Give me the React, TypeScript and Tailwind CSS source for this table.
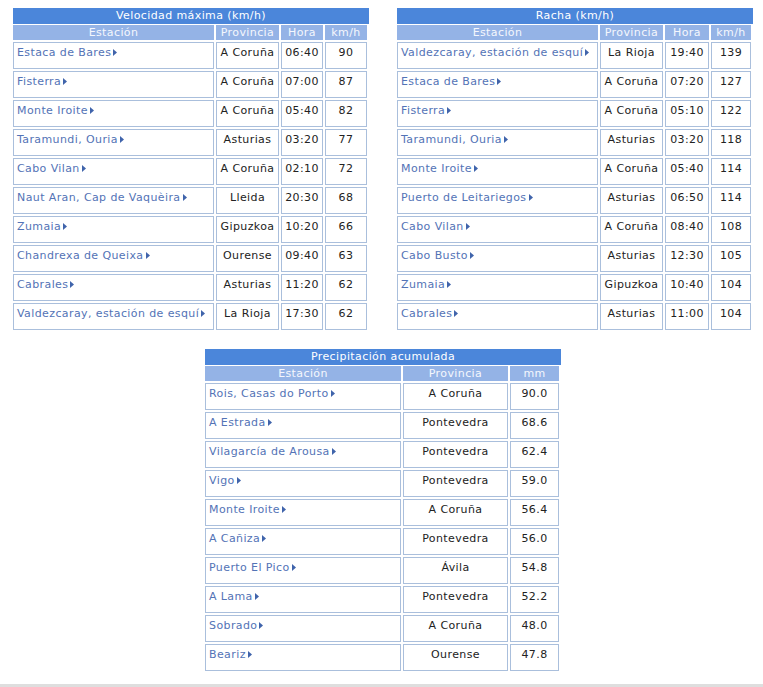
type Row = { name: string; prov: string; hora?: string; val: string }

const velocidad: Row[] = [
  { name: 'Estaca de Bares', prov: 'A Coruña', hora: '06:40', val: '90' },
  { name: 'Fisterra', prov: 'A Coruña', hora: '07:00', val: '87' },
  { name: 'Monte Iroite', prov: 'A Coruña', hora: '05:40', val: '82' },
  { name: 'Taramundi, Ouria', prov: 'Asturias', hora: '03:20', val: '77' },
  { name: 'Cabo Vilan', prov: 'A Coruña', hora: '02:10', val: '72' },
  { name: 'Naut Aran, Cap de Vaquèira', prov: 'Lleida', hora: '20:30', val: '68' },
  { name: 'Zumaia', prov: 'Gipuzkoa', hora: '10:20', val: '66' },
  { name: 'Chandrexa de Queixa', prov: 'Ourense', hora: '09:40', val: '63' },
  { name: 'Cabrales', prov: 'Asturias', hora: '11:20', val: '62' },
  { name: 'Valdezcaray, estación de esquí', prov: 'La Rioja', hora: '17:30', val: '62' },
]

const racha: Row[] = [
  { name: 'Valdezcaray, estación de esquí', prov: 'La Rioja', hora: '19:40', val: '139' },
  { name: 'Estaca de Bares', prov: 'A Coruña', hora: '07:20', val: '127' },
  { name: 'Fisterra', prov: 'A Coruña', hora: '05:10', val: '122' },
  { name: 'Taramundi, Ouria', prov: 'Asturias', hora: '03:20', val: '118' },
  { name: 'Monte Iroite', prov: 'A Coruña', hora: '05:40', val: '114' },
  { name: 'Puerto de Leitariegos', prov: 'Asturias', hora: '06:50', val: '114' },
  { name: 'Cabo Vilan', prov: 'A Coruña', hora: '08:40', val: '108' },
  { name: 'Cabo Busto', prov: 'Asturias', hora: '12:30', val: '105' },
  { name: 'Zumaia', prov: 'Gipuzkoa', hora: '10:40', val: '104' },
  { name: 'Cabrales', prov: 'Asturias', hora: '11:00', val: '104' },
]

const precip: Row[] = [
  { name: 'Rois, Casas do Porto', prov: 'A Coruña', val: '90.0' },
  { name: 'A Estrada', prov: 'Pontevedra', val: '68.6' },
  { name: 'Vilagarcía de Arousa', prov: 'Pontevedra', val: '62.4' },
  { name: 'Vigo', prov: 'Pontevedra', val: '59.0' },
  { name: 'Monte Iroite', prov: 'A Coruña', val: '56.4' },
  { name: 'A Cañiza', prov: 'Pontevedra', val: '56.0' },
  { name: 'Puerto El Pico', prov: 'Ávila', val: '54.8' },
  { name: 'A Lama', prov: 'Pontevedra', val: '52.2' },
  { name: 'Sobrado', prov: 'A Coruña', val: '48.0' },
  { name: 'Beariz', prov: 'Ourense', val: '47.8' },
]

const cell = 'h-[27px] border border-[#aabfdc] pt-[3px] leading-[13px] text-[#222]'
const head = 'h-[15px] bg-[#94b3e6] text-center leading-[15px] text-[#f4f7fd]'

function Arrow() {
  return (
    <svg width="4" height="7" viewBox="0 0 4 7" className="ml-[2px] inline-block align-[0px]">
      <polygon points="0,0 4,3.5 0,7" fill="#4064ab" />
    </svg>
  )
}

function Table({ title, cols, rows, unit, withHora }: {
  title: string
  cols: string
  rows: Row[]
  unit: string
  withHora: boolean
}) {
  return (
    <div className="w-[356px]">
      <div className="h-[16px] bg-[#4b86da] text-center leading-[16px] text-white">{title}</div>
      <div className={`mt-[1px] grid gap-[2px] ${cols}`}>
        <div className={head}>Estación</div>
        <div className={head}>Provincia</div>
        {withHora && <div className={head}>Hora</div>}
        <div className={head}>{unit}</div>
        {rows.map(r => (
          <div key={r.name + r.val} className="contents">
            <div className={`${cell} pl-[3px] whitespace-nowrap`}>
              <a className="text-[#5373b6]">{r.name}</a>
              <Arrow />
            </div>
            <div className={`${cell} text-center`}>{r.prov}</div>
            {withHora && <div className={`${cell} text-center`}>{r.hora}</div>}
            <div className={`${cell} text-center`}>{r.val}</div>
          </div>
        ))}
      </div>
    </div>
  )
}

export default function App() {
  return (
    <div className="min-h-[687px] bg-white text-[11px] tracking-[0.4px] font-['DejaVu_Sans',Verdana,sans-serif]">
      <div className="flex gap-[28px] pl-[13px] pt-[8px]">
        <Table
          title="Velocidad máxima (km/h)"
          cols="grid-cols-[201px_63px_42px_42px]"
          rows={velocidad}
          unit="km/h"
          withHora
        />
        <Table
          title="Racha (km/h)"
          cols="grid-cols-[201px_63px_44px_40px]"
          rows={racha}
          unit="km/h"
          withHora
        />
      </div>
      <div className="mt-[19px] pl-[205px]">
        <Table
          title="Precipitación acumulada"
          cols="grid-cols-[196px_105px_49px]"
          rows={precip}
          unit="mm"
          withHora={false}
        />
      </div>
      <div className="mt-[13px] h-[4px] bg-[#dedede]" />
    </div>
  )
}
